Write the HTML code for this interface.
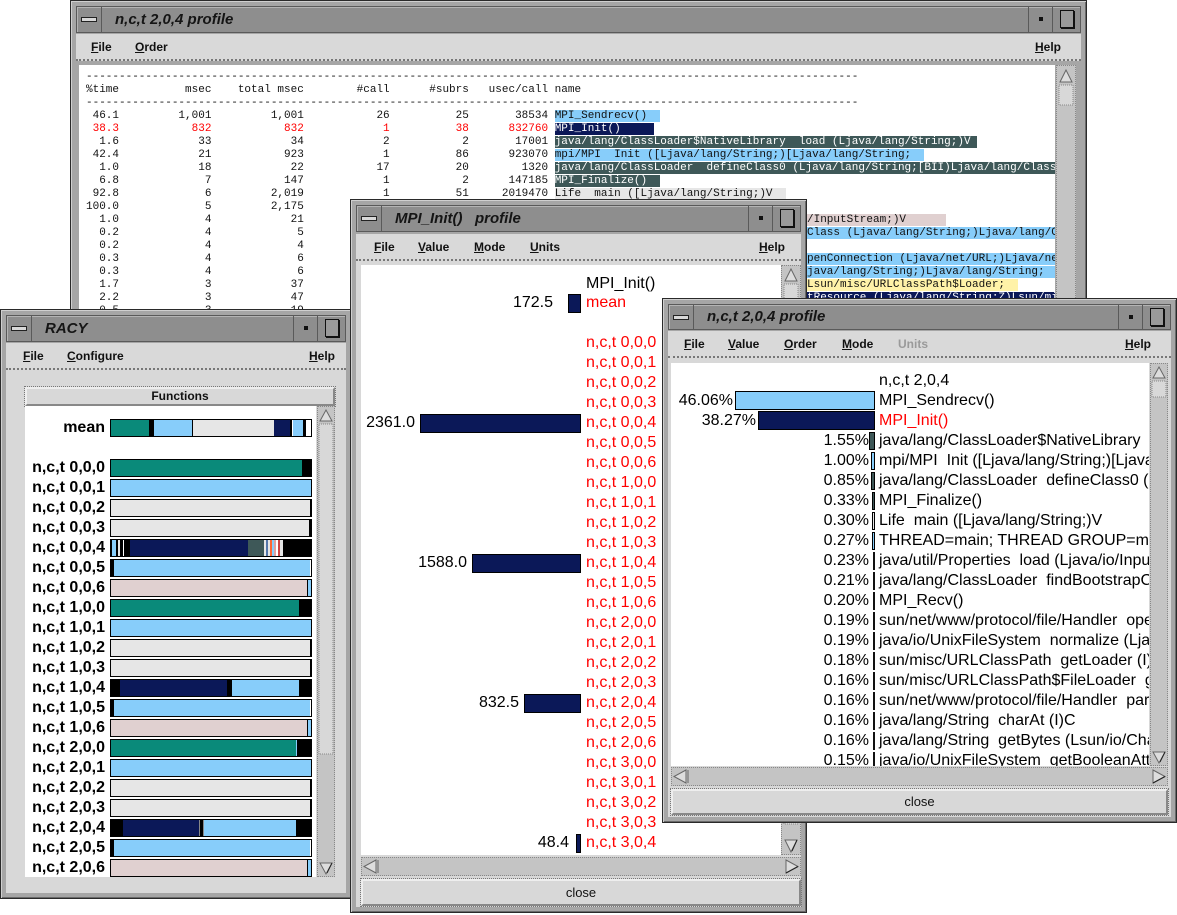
<!DOCTYPE html>
<html><head><meta charset="utf-8"><style>
*{margin:0;padding:0;box-sizing:border-box}
body{width:1177px;height:915px;background:#fff;position:relative;overflow:hidden;font-family:"Liberation Sans",sans-serif}
.win{position:absolute;background:#a6a6a6;border:1px solid #2a2a2a;box-shadow:inset 1px 1px 0 #d0d0d0,inset -1px -1px 0 #6a6a6a}
.title{position:absolute;left:5px;right:5px;top:5px;height:27px;background:#8e8e8e;border:1px solid #5a5a5a;box-shadow:inset 1px 1px 0 #b4b4b4}
.title .t{position:absolute;left:38px;top:4px;font:italic bold 15px "Liberation Sans",sans-serif;color:#151515}
.mb{position:absolute;left:0;top:0;width:25px;height:25px;border-right:1px solid #5a5a5a}
.mb i{position:absolute;left:4px;top:10px;width:16px;height:5px;background:#d8d8d8;border:1px solid #222}
.db{position:absolute;right:27px;top:0;width:25px;height:25px;border-left:1px solid #5a5a5a;border-right:1px solid #5a5a5a}
.db i{position:absolute;left:10px;top:10px;width:4px;height:4px;background:#111}
.xb{position:absolute;right:0;top:0;width:26px;height:25px}
.xb i{position:absolute;left:6px;top:3px;width:14px;height:18px;background:#9a9a9a;border:1px solid #111;box-shadow:1px 1px 0 #111}
.menu{position:absolute;left:5px;right:5px;top:33px;height:27px;background:#d9d9d9;border-bottom:2px dotted #777;font:bold 12px "Liberation Sans",sans-serif;color:#111}
.menu span{position:absolute;top:6px}
.menu u{text-decoration:underline}
.body{position:absolute;left:5px;right:5px;top:60px;bottom:5px;background:#d8d8d8}
.white{position:absolute;background:#fff;overflow:hidden}
.vs{position:absolute;background:#c4c4c4;border:1px dotted #888}
.hs{position:absolute;background:#c4c4c4;border:1px dotted #888}
.btn{position:absolute;background:#d8d8d8;border:2px solid #eee;border-right-color:#888;border-bottom-color:#888;outline:1px dotted #777;text-align:center;font:13px "Liberation Sans",sans-serif;color:#111}
pre{font:11px/13px "Liberation Mono",monospace;color:#111}
.r{position:absolute;height:20px;line-height:20px;font-size:16px;white-space:nowrap}
.red{color:#f00}
.bar{position:absolute;border:1px solid #000}
.rb{position:absolute;left:85px;width:202px;height:18px;border:1px solid #000;display:flex;overflow:hidden}
.rb b{display:block;height:100%}
.lab{position:absolute;left:0;width:80px;text-align:right;font:bold 16px/18px "Liberation Sans",sans-serif;white-space:nowrap}
</style></head><body>

<!-- Window A -->
<div class="win" style="left:70px;top:0;width:1017px;height:815px">
 <div class="title"><div class="mb"><i></i></div><div class="t">n,c,t 2,0,4 profile</div><div class="db"><i></i></div><div class="xb"><i></i></div></div>
 <div class="menu"><span style="left:15px"><u>F</u>ile</span><span style="left:59px"><u>O</u>rder</span><span style="right:20px"><u>H</u>elp</span></div>
 <div class="white" style="left:8px;top:64px;width:976px;height:745px">
<pre style="position:absolute;left:7px;top:6px">---------------------------------------------------------------------------------------------------------------------
%time          msec    total msec        #call      #subrs   usec/call name
---------------------------------------------------------------------------------------------------------------------
 46.1         1,001         1,001           26          25       38534 <span style="background:#87cdfa">MPI_Sendrecv()  </span>
<span class="red"> 38.3           832           832            1          38      832760</span> <span style="background:#0b1858;color:#fff">MPI_Init()     </span>
  1.6            33            34            2           2       17001 <span style="background:#3e5858;color:#fff">java/lang/ClassLoader$NativeLibrary  load (Ljava/lang/String;)V </span>
 42.4            21           923            1          86      923070 <span style="background:#87cdfa">mpi/MPI  Init ([Ljava/lang/String;)[Ljava/lang/String;  </span>
  1.0            18            22           17          20        1320 <span style="background:#3e5858;color:#fff">java/lang/ClassLoader  defineClass0 (Ljava/lang/String;[BII)Ljava/lang/Class;       </span>
  6.8             7           147            1           2      147185 <span style="background:#3e5858;color:#fff">MPI_Finalize()  </span>
 92.8             6         2,019            1          51     2019470 <span style="background:#e6e6e6">Life  main ([Ljava/lang/String;)V  </span>
100.0             5         2,175
  1.0             4            21
  0.2             4             5
  0.2             4             4
  0.3             4             6
  0.3             4             6
  1.7             3            37
  2.2             3            47
  0.5             3            19
</pre>
<pre style="position:absolute;left:728px;top:149px"><span style="background:#e0d0d0">/InputStream;)V      </span>
<span style="background:#87cdfa">Class (Ljava/lang/String;)Ljava/lang/Class;</span>

<span style="background:#87cdfa">penConnection (Ljava/net/URL;)Ljava/net/URL</span>
<span style="background:#87cdfa">java/lang/String;)Ljava/lang/String;       </span>
<span style="background:#fff2a8">Lsun/misc/URLClassPath$Loader;  </span>
<span style="background:#0b1858;color:#fff">tResource (Ljava/lang/String;Z)Lsun/misc/R</span></pre>
 </div>
 <div class="vs" style="left:985px;top:64px;width:20px;height:745px">
  <svg width="18" height="40" style="position:absolute;left:0;top:0"><path d="M3 16 L9 4 L15 16 Z" fill="#ddd" stroke="#666"/><rect x="2" y="19" width="14" height="20" fill="#d8d8d8" stroke="#888" stroke-dasharray="1 1"/></svg>
 </div>
</div>

<!-- Window B RACY -->
<div class="win" style="left:0;top:309px;width:352px;height:590px">
 <div class="title"><div class="mb"><i></i></div><div class="t">RACY</div><div class="db"><i></i></div><div class="xb"><i></i></div></div>
 <div class="menu"><span style="left:17px"><u>F</u>ile</span><span style="left:61px"><u>C</u>onfigure</span><span style="right:11px"><u>H</u>elp</span></div>
 <div class="body"></div>
 <div class="btn" style="left:24px;top:77px;width:310px;height:19px;font:bold 12px/15px 'Liberation Sans',sans-serif">Functions</div>
 <div class="white" style="left:24px;top:96px;width:291px;height:471px">
  <div class="lab" style="top:13px">mean</div>
  <div class="rb" style="top:13px"><b style="width:38px;background:#0a8a7a"></b><b style="width:5px;background:#000"></b><b style="width:39px;background:#87cdfa;border-right:1px solid #000"></b><b style="width:81px;background:#e6e6e6"></b><b style="width:16px;background:#0b1858"></b><b style="width:2px;background:#000"></b><b style="width:1px;background:#fff"></b><b style="width:10px;background:#87cdfa"></b><b style="width:3px;background:#000"></b><b style="width:2px;background:#fff"></b></div>

  <div class="lab" style="top:53px">n,c,t 0,0,0</div><div class="rb" style="top:53px;background:#000"><b style="width:191px;background:#0a8a7a"></b></div>
  <div class="lab" style="top:73px">n,c,t 0,0,1</div><div class="rb" style="top:73px;background:#87cdfa"></div>
  <div class="lab" style="top:93px">n,c,t 0,0,2</div><div class="rb" style="top:93px;background:#000"><b style="width:199px;background:#e6e6e6"></b></div>
  <div class="lab" style="top:113px">n,c,t 0,0,3</div><div class="rb" style="top:113px;background:#000"><b style="width:198px;background:#e6e6e6"></b></div>
  <div class="lab" style="top:133px">n,c,t 0,0,4</div><div class="rb" style="top:133px;background:#000"><b style="width:1px"></b><b style="width:4px;background:#87cdfa"></b><b style="width:2px;background:#000"></b><b style="width:2px;background:#e6e6e6"></b><b style="width:3px;background:#000"></b><b style="width:1px;background:#fff"></b><b style="width:6px;background:#000"></b><b style="width:118px;background:#0b1858"></b><b style="width:16px;background:#3e5858"></b><b style="width:2px;background:#e6e6e6"></b><b style="width:2px;background:#5577aa"></b><b style="width:2px;background:#e6e6e6"></b><b style="width:2px;background:#ff6633"></b><b style="width:2px;background:#87cdfa"></b><b style="width:2px;background:#e0a0a0"></b><b style="width:2px;background:#fff"></b><b style="width:2px;background:#cc4444"></b><b style="width:3px;background:#e6e6e6"></b></div>
  <div class="lab" style="top:153px">n,c,t 0,0,5</div><div class="rb" style="top:153px;background:#000"><b style="width:3px"></b><b style="width:196px;background:#87cdfa"></b><b style="width:1px;background:#fff"></b></div>
  <div class="lab" style="top:173px">n,c,t 0,0,6</div><div class="rb" style="top:173px;background:#87cdfa"><b style="width:197px;background:#e0d0d0;border-right:1px solid #000"></b></div>
  <div class="lab" style="top:193px">n,c,t 1,0,0</div><div class="rb" style="top:193px;background:#000"><b style="width:188px;background:#0a8a7a"></b></div>
  <div class="lab" style="top:213px">n,c,t 1,0,1</div><div class="rb" style="top:213px;background:#87cdfa"></div>
  <div class="lab" style="top:233px">n,c,t 1,0,2</div><div class="rb" style="top:233px;background:#000"><b style="width:199px;background:#e6e6e6"></b></div>
  <div class="lab" style="top:253px">n,c,t 1,0,3</div><div class="rb" style="top:253px;background:#000"><b style="width:199px;background:#e6e6e6"></b></div>
  <div class="lab" style="top:273px">n,c,t 1,0,4</div><div class="rb" style="top:273px;background:#000"><b style="width:9px"></b><b style="width:107px;background:#0b1858"></b><b style="width:5px"></b><b style="width:67px;background:#87cdfa"></b></div>
  <div class="lab" style="top:293px">n,c,t 1,0,5</div><div class="rb" style="top:293px;background:#000"><b style="width:3px"></b><b style="width:196px;background:#87cdfa"></b><b style="width:1px;background:#fff"></b></div>
  <div class="lab" style="top:313px">n,c,t 1,0,6</div><div class="rb" style="top:313px;background:#87cdfa"><b style="width:197px;background:#e0d0d0;border-right:1px solid #000"></b></div>
  <div class="lab" style="top:333px">n,c,t 2,0,0</div><div class="rb" style="top:333px;background:#000"><b style="width:185px;background:#0a8a7a"></b><b style="width:1px;background:#87cdfa"></b></div>
  <div class="lab" style="top:353px">n,c,t 2,0,1</div><div class="rb" style="top:353px;background:#87cdfa"></div>
  <div class="lab" style="top:373px">n,c,t 2,0,2</div><div class="rb" style="top:373px;background:#000"><b style="width:199px;background:#e6e6e6"></b></div>
  <div class="lab" style="top:393px">n,c,t 2,0,3</div><div class="rb" style="top:393px;background:#000"><b style="width:199px;background:#e6e6e6"></b></div>
  <div class="lab" style="top:413px">n,c,t 2,0,4</div><div class="rb" style="top:413px;background:#000"><b style="width:12px"></b><b style="width:76px;background:#0b1858"></b><b style="width:1px;background:#888"></b><b style="width:3px"></b><b style="width:1px;background:#888"></b><b style="width:92px;background:#87cdfa"></b></div>
  <div class="lab" style="top:433px">n,c,t 2,0,5</div><div class="rb" style="top:433px;background:#000"><b style="width:3px"></b><b style="width:196px;background:#87cdfa"></b><b style="width:1px;background:#fff"></b></div>
  <div class="lab" style="top:453px">n,c,t 2,0,6</div><div class="rb" style="top:453px;background:#87cdfa"><b style="width:197px;background:#e0d0d0;border-right:1px solid #000"></b></div>
 </div>
 <div class="vs" style="left:316px;top:96px;width:18px;height:471px">
  <svg width="16" height="471" style="position:absolute;left:0;top:0"><path d="M2 14 L8 3 L14 14 Z" fill="#ddd" stroke="#666"/><rect x="1" y="17" width="14" height="330" fill="#d8d8d8" stroke="#888" stroke-dasharray="1 1"/><path d="M2 456 L14 456 L8 467 Z" fill="#ddd" stroke="#666"/><path d="M9 466 L14 456" stroke="#222"/></svg>
 </div>
</div>

<!-- Window C -->
<div class="win" style="left:350px;top:199px;width:457px;height:714px">
 <div class="title"><div class="mb"><i></i></div><div class="t">MPI_Init()&nbsp;&nbsp; profile</div><div class="db"><i></i></div><div class="xb"><i></i></div></div>
 <div class="menu" style="top:34px"><span style="left:18px"><u>F</u>ile</span><span style="left:62px"><u>V</u>alue</span><span style="left:118px"><u>M</u>ode</span><span style="left:174px"><u>U</u>nits</span><span style="right:16px"><u>H</u>elp</span></div>
 <div class="body" style="top:61px"></div>
 <div class="white" style="left:10px;top:65px;width:420px;height:590px">
  <div class="r" style="left:225px;top:9px">MPI_Init()</div>
  <div class="r" style="right:228px;top:28px">172.5</div><div class="bar" style="left:207px;top:29px;width:13px;height:19px;background:#0b1858"></div>
  <div class="r red" style="left:225px;top:28px">mean</div>
  <div class="r red" style="left:225px;top:68px;line-height:20px">n,c,t 0,0,0<br>n,c,t 0,0,1<br>n,c,t 0,0,2<br>n,c,t 0,0,3<br>n,c,t 0,0,4<br>n,c,t 0,0,5<br>n,c,t 0,0,6<br>n,c,t 1,0,0<br>n,c,t 1,0,1<br>n,c,t 1,0,2<br>n,c,t 1,0,3<br>n,c,t 1,0,4<br>n,c,t 1,0,5<br>n,c,t 1,0,6<br>n,c,t 2,0,0<br>n,c,t 2,0,1<br>n,c,t 2,0,2<br>n,c,t 2,0,3<br>n,c,t 2,0,4<br>n,c,t 2,0,5<br>n,c,t 2,0,6<br>n,c,t 3,0,0<br>n,c,t 3,0,1<br>n,c,t 3,0,2<br>n,c,t 3,0,3<br>n,c,t 3,0,4</div>
  <div class="r" style="right:366px;top:148px">2361.0</div><div class="bar" style="left:59px;top:149px;width:161px;height:19px;background:#0b1858"></div>
  <div class="r" style="right:314px;top:288px">1588.0</div><div class="bar" style="left:111px;top:289px;width:109px;height:19px;background:#0b1858"></div>
  <div class="r" style="right:262px;top:428px">832.5</div><div class="bar" style="left:163px;top:429px;width:57px;height:19px;background:#0b1858"></div>
  <div class="r" style="right:212px;top:568px">48.4</div><div class="bar" style="left:215px;top:569px;width:5px;height:19px;background:#0b1858"></div>
 </div>
 <div class="vs" style="left:430px;top:65px;width:20px;height:590px">
  <svg width="18" height="590" style="position:absolute;left:0;top:0"><path d="M3 15 L9 3 L15 15 Z" fill="#ddd" stroke="#666"/><rect x="2" y="18" width="14" height="540" fill="#d8d8d8" stroke="#888" stroke-dasharray="1 1"/><path d="M3 574 L15 574 L9 586 Z" fill="#ddd" stroke="#666"/><path d="M10 585 L15 574" stroke="#222"/></svg>
 </div>
 <div class="hs" style="left:10px;top:657px;width:440px;height:19px">
  <svg width="440" height="17" style="position:absolute;left:0;top:0"><path d="M14 2 L2 8.5 L14 15 Z" fill="#ddd" stroke="#666"/><path d="M16 2 L16 15" stroke="#666"/><path d="M424 2 L436 8.5 L424 15 Z" fill="#ddd" stroke="#666"/><path d="M424 15 L436 8.5" stroke="#222"/></svg>
 </div>
 <div class="btn" style="left:10px;top:679px;width:440px;height:27px;line-height:23px">close</div>
</div>

<!-- Window D -->
<div class="win" style="left:662px;top:298px;width:515px;height:525px">
 <div class="title" style="height:26px"><div class="mb"><i></i></div><div class="t" style="top:3px">n,c,t 2,0,4 profile</div><div class="db"><i></i></div><div class="xb"><i></i></div></div>
 <div class="menu" style="top:32px"><span style="left:16px"><u>F</u>ile</span><span style="left:60px"><u>V</u>alue</span><span style="left:116px"><u>O</u>rder</span><span style="left:174px"><u>M</u>ode</span><span style="left:230px;color:#9a9a9a">Units</span><span style="right:20px"><u>H</u>elp</span></div>
 <div class="body" style="top:59px"></div>
 <div class="white" style="left:8px;top:64px;width:478px;height:403px">
  <div class="r" style="left:208px;top:8px;line-height:20px">n,c,t 2,0,4<br>MPI_Sendrecv()<br><span class="red">MPI_Init()</span><br>java/lang/ClassLoader$NativeLibrary&nbsp; load (Ljava/lang/String;)V<br>mpi/MPI&nbsp; Init ([Ljava/lang/String;)[Ljava/lang/String;<br>java/lang/ClassLoader&nbsp; defineClass0 (Ljava/lang/String;<br>MPI_Finalize()<br>Life&nbsp; main ([Ljava/lang/String;)V<br>THREAD=main; THREAD GROUP=main<br>java/util/Properties&nbsp; load (Ljava/io/InputStream;)V<br>java/lang/ClassLoader&nbsp; findBootstrapClass<br>MPI_Recv()<br>sun/net/www/protocol/file/Handler&nbsp; openConnection<br>java/io/UnixFileSystem&nbsp; normalize (Ljava/lang/String;)<br>sun/misc/URLClassPath&nbsp; getLoader (I)<br>sun/misc/URLClassPath$FileLoader&nbsp; getResource<br>sun/net/www/protocol/file/Handler&nbsp; parseURL<br>java/lang/String&nbsp; charAt (I)C<br>java/lang/String&nbsp; getBytes (Lsun/io/CharToByteConverter;)<br>java/io/UnixFileSystem&nbsp; getBooleanAttributes0</div>
  <div class="r" style="right:416px;top:28px">46.06%</div><div class="bar" style="left:64px;top:28px;width:140px;height:19px;background:#87cdfa"></div>
  <div class="r" style="right:393px;top:48px">38.27%</div><div class="bar" style="left:87px;top:48px;width:117px;height:19px;background:#0b1858"></div>
  <div class="r" style="right:280px;top:68px;line-height:20px;text-align:right">1.55%<br>1.00%<br>0.85%<br>0.33%<br>0.30%<br>0.27%<br>0.23%<br>0.21%<br>0.20%<br>0.19%<br>0.19%<br>0.18%<br>0.16%<br>0.16%<br>0.16%<br>0.16%<br>0.15%</div>
  <div class="bar" style="left:198px;top:69px;width:6px;height:18px;background:#3e5858"></div>
  <div class="bar" style="left:200px;top:89px;width:4px;height:18px;background:#87cdfa"></div>
  <div class="bar" style="left:200px;top:109px;width:4px;height:18px;background:#3e5858"></div>
  <div class="bar" style="left:201px;top:129px;width:3px;height:18px;background:#3e5858"></div>
  <div class="bar" style="left:201px;top:149px;width:3px;height:18px;background:#e6e6e6"></div>
  <div class="bar" style="left:201px;top:169px;width:3px;height:18px;background:#87cdfa"></div>
  <div style="position:absolute;left:202px;top:189px;width:2px;height:218px;background:repeating-linear-gradient(#111 0 18px,#fff 18px 20px)"></div>
 </div>
 <div class="vs" style="left:487px;top:64px;width:18px;height:403px">
  <svg width="16" height="403" style="position:absolute;left:0;top:0"><path d="M2 14 L8 3 L14 14 Z" fill="#ddd" stroke="#666"/><rect x="1" y="17" width="14" height="16" fill="#d8d8d8" stroke="#888" stroke-dasharray="1 1"/><path d="M2 388 L14 388 L8 399 Z" fill="#ddd" stroke="#666"/><path d="M9 398 L14 388" stroke="#222"/></svg>
 </div>
 <div class="hs" style="left:8px;top:468px;width:497px;height:19px">
  <svg width="497" height="17" style="position:absolute;left:0;top:0"><path d="M14 2 L2 8.5 L14 15 Z" fill="#ddd" stroke="#666"/><path d="M16 2 L16 15" stroke="#666"/><path d="M481 2 L493 8.5 L481 15 Z" fill="#ddd" stroke="#666"/><path d="M481 15 L493 8.5" stroke="#222"/></svg>
 </div>
 <div class="btn" style="left:8px;top:490px;width:497px;height:26px;line-height:22px">close</div>
</div>
</body></html>
